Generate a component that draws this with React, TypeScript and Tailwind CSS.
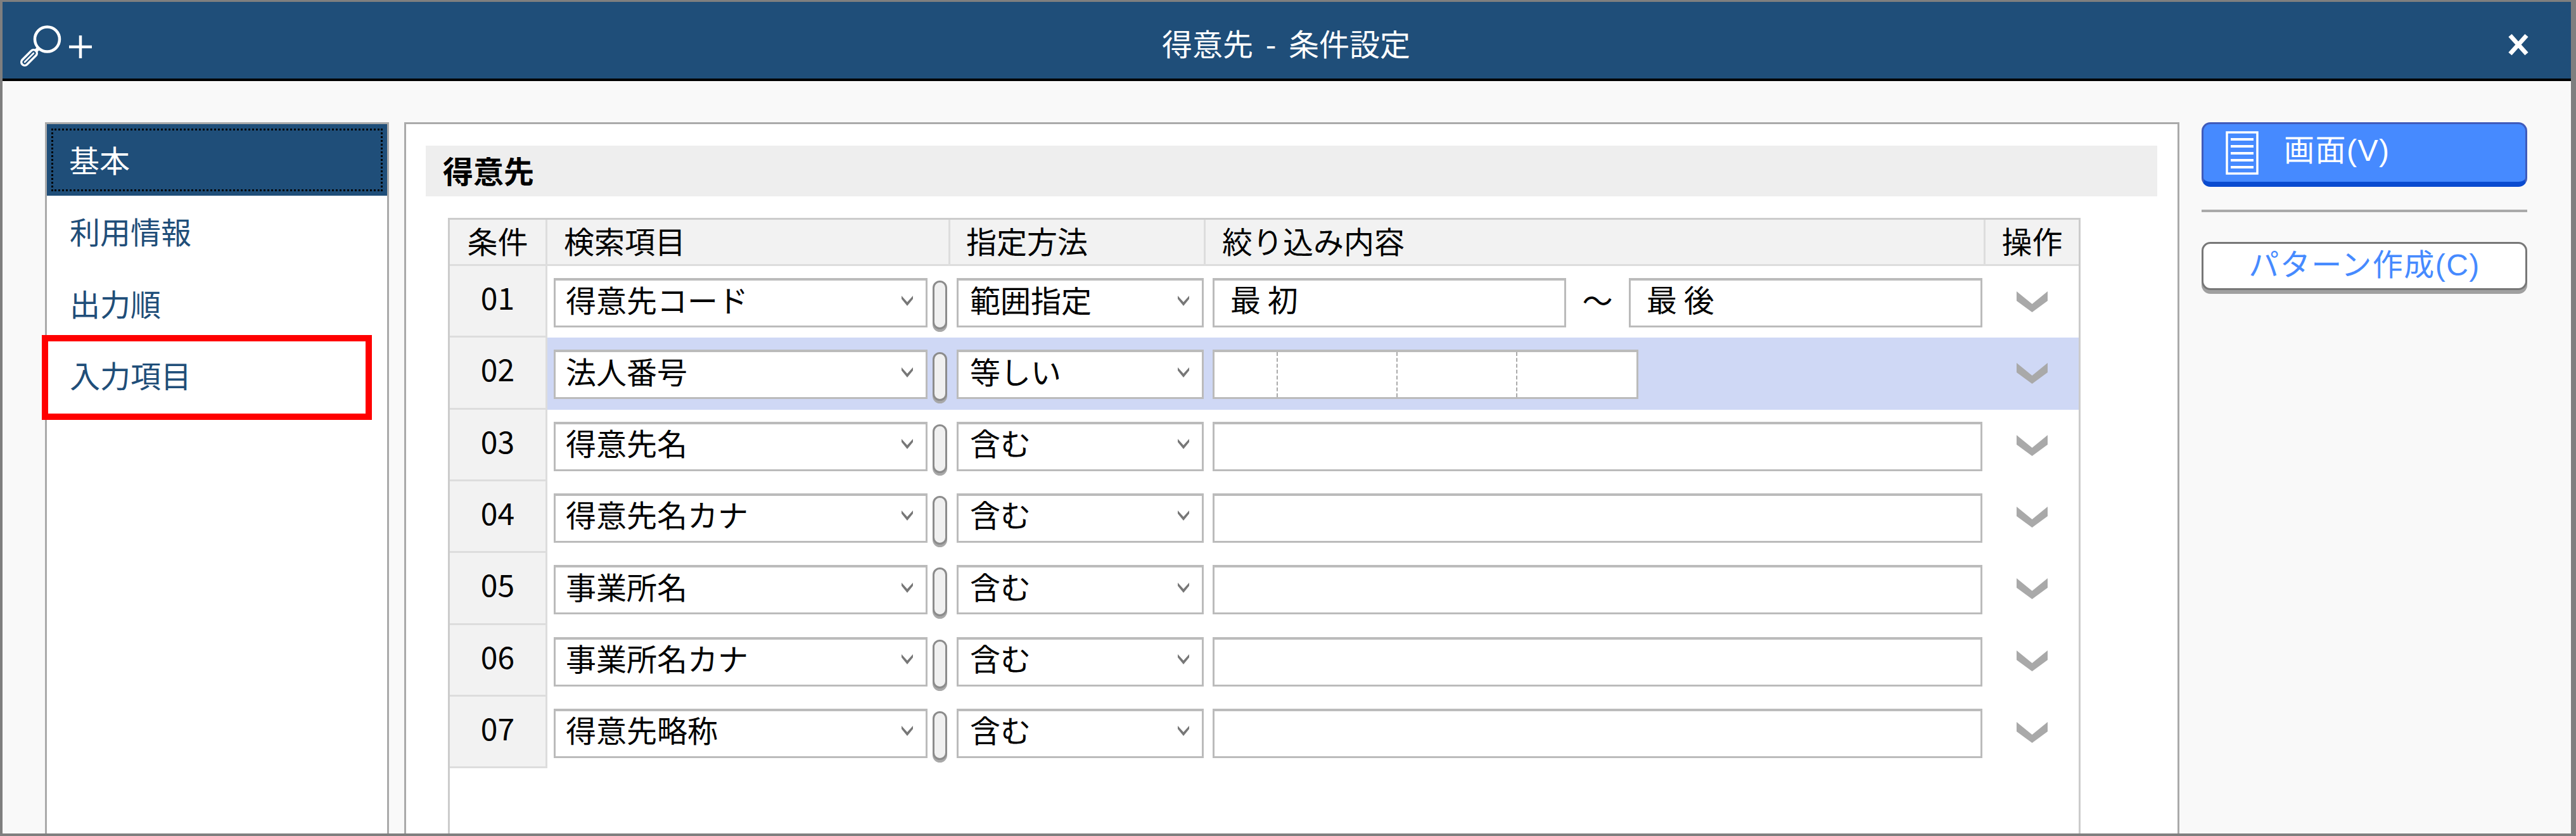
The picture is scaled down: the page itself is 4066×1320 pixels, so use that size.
import React from "react";

const font = { fontFamily: '"Noto Sans CJK JP", "Noto Sans", sans-serif' };

function Caret() {
  return (
    <svg width="18" height="16" viewBox="0 0 18 16" className="shrink-0">
      <path d="M0 0 L9 10 L18 0 L18 5 L9 16 L0 5 Z" fill="#777777" />
    </svg>
  );
}

function Chevron() {
  return (
    <svg width="49" height="33" viewBox="0 0 49 33">
      <path d="M0 0 L24.5 20 L49 0 L49 15 L24.5 33 L0 15 Z" fill="#a9a9a9" />
    </svg>
  );
}

function Select({ label, w, pl }: { label: string; w: string; pl: string }) {
  return (
    <div className={`${w} ${pl} h-[78px] shrink-0 bg-white border-[3px] border-t-[4px] border-[#bbbbbb] flex items-center justify-between pr-[20px]`}>
      <span className="pb-[14px]">{label}</span>
      <span className="pb-[8px]"><Caret /></span>
    </div>
  );
}

function Pill() {
  return (
    <div className="w-[23px] h-[77px] mt-[4px] shrink-0 rounded-full bg-[#f0f0f0] border-[3px] border-[#8c8c8c] shadow-[0_4px_0_#a8a8a8]" />
  );
}

const rows = [
  { n: "01", a: "得意先コード", b: "範囲指定" },
  { n: "02", a: "法人番号", b: "等しい" },
  { n: "03", a: "得意先名", b: "含む" },
  { n: "04", a: "得意先名カナ", b: "含む" },
  { n: "05", a: "事業所名", b: "含む" },
  { n: "06", a: "事業所名カナ", b: "含む" },
  { n: "07", a: "得意先略称", b: "含む" },
];

const inputBox = "h-[78px] shrink-0 bg-white border-[3px] border-t-[4px] border-[#bbbbbb]";

function Row({ n, a, b, i }: { n: string; a: string; b: string; i: number }) {
  return (
    <div className="flex h-[113.33px]">
      <div className="w-[154px] shrink-0 bg-[#f2f2f2] border-r-[3px] border-b-[3px] border-[#dddddd] flex justify-center items-start pt-[18px] leading-[60px]">
        {n}
      </div>
      <div className={`flex-1 flex items-start pt-[19px] pl-[10px] ${i === 1 ? "bg-[#cfd8f5]" : ""}`}>
        <Select label={a} w="w-[590px]" pl="pl-[16px]" />
        <div className="ml-[8px]"><Pill /></div>
        <div className="ml-[15px]"><Select label={b} w="w-[390px]" pl="pl-[18px]" /></div>
        <div className="ml-[14px] w-[1215px] shrink-0 flex items-start">
          {i === 0 ? (
            <div className="flex w-full items-start">
              <div className={`${inputBox} w-[558px] pl-[25px] leading-[57px]`}>最 初</div>
              <div className="flex-1 text-center leading-[66px]">～</div>
              <div className={`${inputBox} w-[558px] pl-[25px] leading-[57px]`}>最 後</div>
            </div>
          ) : i === 1 ? (
            <div className={`${inputBox} w-[672px] flex`}>
              <div className="w-[100px] border-r-[2px] border-dashed border-[#aaaaaa]" />
              <div className="w-[189px] border-r-[2px] border-dashed border-[#aaaaaa]" />
              <div className="w-[189px] border-r-[2px] border-dashed border-[#aaaaaa]" />
              <div className="flex-1" />
            </div>
          ) : (
            <div className={`${inputBox} w-full`} />
          )}
        </div>
        <div className="flex-1 flex justify-center pt-[21px] pl-[4px]">
          <Chevron />
        </div>
      </div>
    </div>
  );
}

export default function App() {
  return (
    <div
      style={font}
      className="relative w-[4066px] h-[1320px] overflow-hidden flex flex-col bg-[#f9f9f9] border-t-[3px] border-l-[4px] border-r-[8px] border-b-[4px] border-[#7f7f7f] text-[48px] text-black"
    >
      <header className="relative h-[125px] shrink-0 bg-[#1f4e79] border-b-[4px] border-black flex items-center justify-between pl-[26px] pr-[66px] text-white">
        <svg width="120" height="70" viewBox="0 0 120 70" className="mt-[15px]">
          <circle cx="44.5" cy="26" r="19.5" fill="none" stroke="#ffffff" strokeWidth="4.5" />
          <path d="M31 40 L24 47" stroke="#ffffff" strokeWidth="6" />
          <path d="M9 62 L23 48" stroke="#ffffff" strokeWidth="14" strokeLinecap="round" />
          <path d="M9 62 L23 48" stroke="#1f4e79" strokeWidth="7" strokeLinecap="round" />
          <path d="M9 62 L23 48" stroke="#ffffff" strokeWidth="2.5" strokeLinecap="round" />
          <path d="M79 38 H115 M97 20 V56" stroke="#ffffff" strokeWidth="4.5" />
        </svg>
        <h1 className="flex-1 text-center text-[48px] font-normal leading-none pt-[6px] pr-[48px] [word-spacing:9px]">得意先 - 条件設定</h1>
        <svg width="34" height="35" viewBox="0 0 34 35" className="mt-[14px]">
          <path d="M4 3 L30 32 M30 3 L4 32" stroke="#ffffff" strokeWidth="7" />
        </svg>
      </header>

      <main className="flex-1 min-h-0 flex items-stretch pl-[67px] pt-[65px]">
        <nav className="w-[543px] shrink-0 bg-white border-[3px] border-b-0 border-[#aaaaaa] text-[#1f4e79]">
          <div className="h-[113px] bg-[#1f4e79] p-[7px] text-white">
            <div className="h-full border-[3px] border-dotted border-black pl-[25px] pb-[4px] flex items-center">基本</div>
          </div>
          <div className="h-[113px] pl-[36px] flex items-center pb-[4px]">利用情報</div>
          <div className="h-[113px] pl-[36px] flex items-center pb-[2px]">出力順</div>
          <div className="h-[113px] pl-[36px] flex items-center pb-[2px]">入力項目</div>
        </nav>

        <section className="ml-[24px] w-[2802px] shrink-0 bg-white border-[3px] border-b-0 border-[#aaaaaa] pt-[34px] pl-[31px] flex flex-col">
          <div className="w-[2733px] h-[80px] shrink-0 bg-[#eeeeee] pl-[27px] flex items-center font-bold pb-[4px]">得意先</div>
          <div className="ml-[35px] mt-[34px] w-[2577px] flex-1 border-[3px] border-b-0 border-[#cccccc]">
            <div className="flex h-[73px] bg-[#f2f2f2] border-b-[3px] border-[#dddddd] leading-[64px]">
              <div className="w-[154px] shrink-0 border-r-[3px] border-[#dddddd] text-center">条件</div>
              <div className="w-[636px] shrink-0 border-r-[3px] border-[#dddddd] pl-[26px]">検索項目</div>
              <div className="w-[403px] shrink-0 border-r-[3px] border-[#dddddd] pl-[25px]">指定方法</div>
              <div className="w-[1231px] shrink-0 border-r-[3px] border-[#dddddd] pl-[26px]">絞り込み内容</div>
              <div className="flex-1 text-center">操作</div>
            </div>
            {rows.map((r, i) => (
              <Row key={r.n} n={r.n} a={r.a} b={r.b} i={i} />
            ))}
          </div>
        </section>

        <aside className="ml-[35px] w-[514px] shrink-0 flex flex-col">
          <button className="h-[102px] rounded-[14px] bg-[#468aff] border-[3px] border-[#3f5bbb] border-b-[8px] border-b-[#0a4bd0] flex items-start pl-[35px] pt-[11px] text-white">
            <svg width="52" height="69" viewBox="0 0 52 69" className="shrink-0">
              <rect x="2" y="2" width="48" height="65" fill="none" stroke="#ffffff" strokeWidth="3.5" />
              <path d="M8 13 H44 M8 24 H44 M8 35 H44 M8 46 H44 M8 57 H44" stroke="#ffffff" strokeWidth="4" />
            </svg>
            <span className="ml-[40px] leading-[62px] font-['Liberation_Sans','Noto_Sans_CJK_JP',sans-serif] tracking-[1.5px]">画面(V)</span>
          </button>
          <div className="h-[4px] mt-[36px] bg-[#aaaaaa]" />
          <button className="h-[76px] mt-[47px] rounded-[14px] bg-white border-[3px] border-[#777777] shadow-[0_6px_0_#a0a0a0] text-[#468aff] leading-none pb-[2px] font-['Liberation_Sans','Noto_Sans_CJK_JP',sans-serif] tracking-[1.5px]">
            パターン作成(C)
          </button>
        </aside>
      </main>

      <div className="absolute left-[62px] top-[526px] w-[521px] h-[134px] border-[10px] border-[#ff0000]" />
    </div>
  );
}
